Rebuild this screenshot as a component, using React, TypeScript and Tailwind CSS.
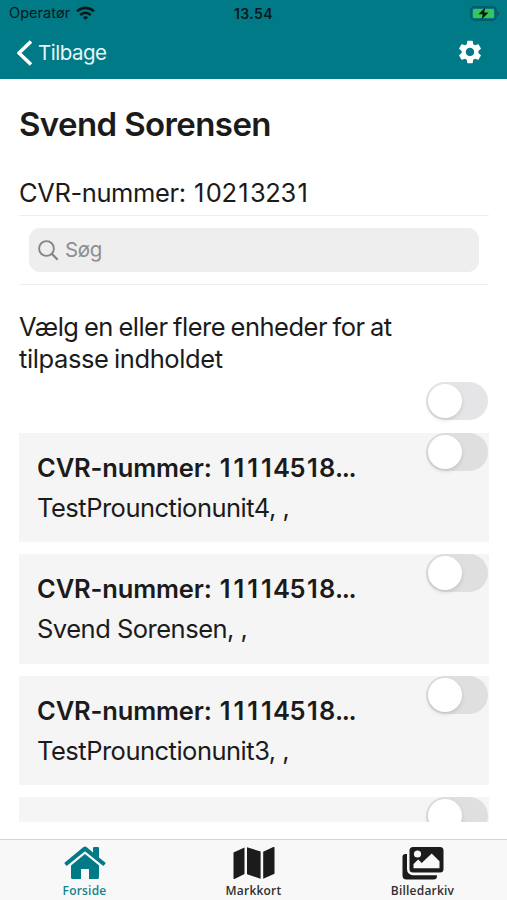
import { MdSettings } from "react-icons/md";

const SANS = "font-['Inter','Liberation_Sans',sans-serif]";

function StatusBar() {
  return (
    <div className="flex h-[27px] items-center px-[9px] text-[#06191b]">
      <div className="flex flex-1 items-center gap-[6px]">
        <span className="w-[61px] whitespace-nowrap text-[14.5px] leading-none tracking-[0.05px]">Operatør</span>
        <svg width="19" height="15" viewBox="0 0 19 15" fill="none" stroke="currentColor" strokeWidth="2.7">
          <path d="M1 5.4C5.8.8 13.2.8 18 5.4" />
          <path d="M4.2 9C7.2 6 11.8 6 14.8 9" />
          <path d="M6.8 11.2c1.6-1.3 3.8-1.3 5.4 0L9.5 14z" fill="currentColor" stroke="none" />
        </svg>
      </div>
      <span className="text-[14px] font-semibold leading-none tracking-[0.4px]">13.54</span>
      <div className="flex flex-1 justify-end">
        <svg className="mr-[-3px]" width="31" height="15" viewBox="0 0 31 15">
          <rect x="1" y="1" width="25" height="13" rx="3.5" fill="none" stroke="#0a5259" strokeWidth="1.4" />
          <rect x="3" y="3" width="21" height="9" rx="1.5" fill="#35c759" />
          <path d="M27.6 5.2c2 .8 2 3.8 0 4.6z" fill="#0a5259" />
          <path d="M15.3 1.5 8.4 8.2h4.3L11.5 13.5 18.6 6.6h-4.4z" fill="#071a12" />
        </svg>
      </div>
    </div>
  );
}

/* Evens out the digit pitch by padding the narrow ones. */
function Digits({ value }: { value: string }) {
  return (
    <span className="tracking-[-0.4px]">
      {value.split(/(1)/).map((part, i) =>
        part === "1" ? <span key={i} className="px-[1.7px]">1</span> : part,
      )}
    </span>
  );
}

function Toggle({ plain = false }: { plain?: boolean }) {
  return (
    <div className={`mr-px flex h-[38px] w-[62px] shrink-0 items-center rounded-full pl-[2px] ${plain ? "bg-[#e5e5e7]" : "bg-[#dfdfdf]"}`}>
      <div className="size-[34px] rounded-full bg-white shadow-[0_2px_4px_rgba(0,0,0,0.13)]" />
    </div>
  );
}

function Unit({ name }: { name?: string }) {
  return (
    <div className="flex h-[109.3px] shrink-0 items-start justify-between bg-[#f5f5f5] pl-[18px]">
      {name && (
        <div className="pt-[15px] text-[25.5px]">
          <div className="h-[40px] whitespace-nowrap font-semibold leading-[40px] tracking-[-0.15px]">
            CVR-nummer: <Digits value="11114518" />
            <span className="tracking-[-1.3px]">...</span>
          </div>
          <div className="h-[40px] whitespace-nowrap leading-[40px] tracking-[-0.5px]">{name}</div>
        </div>
      )}
      <div className="ml-auto">
        <Toggle />
      </div>
    </div>
  );
}

function HomeIcon() {
  return (
    <svg width="42" height="34" viewBox="0 0 42 34" fill="#007a87">
      <path d="M7 19.5 21 8l14 11.5V31.5a1.500 1.500 0 0 1-1.500 1.500H25V23h-8v10H8.500A1.500 1.500 0 0 1 7 31.500z" />
      <path d="M19.200 1.300a2.900 2.900 0 0 1 3.600 0L29 6.500V2a1 1 0 0 1 1-1h4a1 1 0 0 1 1 1v9.500l6.200 5.100a.8.8 0 0 1 .1 1.100l-1.500 1.800a.8.8 0 0 1-1.100.1L21 5.300 3.300 19.600a.8.8 0 0 1-1.100-.1L.7 17.700a.8.8 0 0 1 .1-1.100z" />
    </svg>
  );
}

function MapIcon() {
  return (
    <svg width="42" height="34" viewBox="0 0 42 34" fill="#1b1b1b">
      <path d="M.5 6.5 11.500 1.500v26.500L1.500 33a.8.8 0 0 1-1-.8z" />
      <path d="M14 1.200 27.600 5.500v27.300L14 28.200z" />
      <path d="M30.200 5.800 40.300 1.100a.8.8 0 0 1 1.200.8v25.800l-11.300 5z" />
    </svg>
  );
}

function PicturesIcon() {
  return (
    <svg width="42" height="34" viewBox="0 0 42 34">
      <path d="M5 8H3.500A3 3 0 0 0 .5 11v18.500a4 4 0 0 0 4 4h27a3.500 3.500 0 0 0 3.500-3.500v-.8H11a6 6 0 0 1-6-6z" fill="#1b1b1b" />
      <rect x="7.500" y="1" width="34" height="25.500" rx="3.500" fill="#1b1b1b" />
      <circle cx="15.500" cy="8" r="3.600" fill="#f8f8f8" />
      <path d="M11.500 22.300v-4.200l4.700-4.600 3.500 3.500L29.700 7.600l7.800 7.700v7z" fill="#f8f8f8" />
    </svg>
  );
}

function Tab({ label, active = false, children }: { label: string; active?: boolean; children: React.ReactNode }) {
  return (
    <div className="flex flex-1 flex-col items-center pt-[6px]">
      {children}
      <span className={`mt-[3px] font-['Open_Sans','Noto_Sans',sans-serif] text-[12px] font-semibold leading-[16px] tracking-[0.2px] ${active ? "text-[#16828c]" : "text-[#303030]"}`}>
        {label}
      </span>
    </div>
  );
}

export default function App() {
  return (
    <div className={`flex h-[900px] w-[507px] flex-col overflow-hidden bg-white text-[#1b1b1b] ${SANS}`}>
      <header className="h-[79px] shrink-0 bg-[#007a87]">
        <StatusBar />
        <div className="flex h-[51px] items-center justify-between pl-[16px] pr-[23px] text-white">
          <div className="flex items-center gap-[6px]">
            <svg width="16" height="26" viewBox="0 0 16 26" fill="none" stroke="currentColor" strokeWidth="3.6">
              <path d="M15 1.5 3 13l12 11.5" strokeLinejoin="round" />
            </svg>
            <span className="pt-px text-[20.5px] leading-none tracking-[-0.5px] text-[#e5f6f7]">Tilbage</span>
          </div>
          <MdSettings size={28} className="-mt-px" />
        </div>
      </header>

      <main className="flex h-[743px] shrink-0 flex-col overflow-hidden pl-[19px] pr-[18px]">
        <h1 className="mt-[24px] h-[42px] whitespace-nowrap text-[33px] font-semibold leading-[42px] tracking-[-0.6px]">Svend Sorensen</h1>
        <p className="mt-[32px] h-[32px] whitespace-nowrap text-[25.5px] leading-[32px] tracking-[-0.4px]">
          CVR-nummer: <Digits value="10213231" />
        </p>
        <div className="mt-[6px] flex h-[70px] shrink-0 items-center border-y-[1.5px] border-[#eeeeee] px-[10px]">
          <div className="flex h-[44px] w-full items-center gap-[6px] rounded-[11px] bg-[#eeeeee] pl-[9px] text-[#8e8e8e]">
            <svg width="21" height="21" viewBox="0 0 21 21" fill="none" stroke="#858585" strokeWidth="1.9">
              <circle cx="8.5" cy="8.5" r="7.4" />
              <path d="m13.7 13.7 6 6" strokeWidth="2.3" />
            </svg>
            <span className="text-[20.5px] leading-none tracking-[-0.4px]">Søg</span>
          </div>
        </div>
        <p className="mt-[26px] h-[64px] whitespace-nowrap text-[25.5px] leading-[32px] tracking-[-0.5px] [word-spacing:-1.2px]">
          Vælg en eller flere enheder for at
          <br />
          <span className="tracking-[-0.4px]">tilpasse indholdet</span>
        </p>
        <div className="mt-[7px] flex shrink-0 justify-end">
          <Toggle plain />
        </div>
        <div className="mt-[13px] flex flex-col gap-[12px]">
          <Unit name="TestProunctionunit4, ," />
          <Unit name="Svend Sorensen, ," />
          <Unit name="TestProunctionunit3, ," />
          <Unit />
        </div>
      </main>

      <nav className="mt-auto flex h-[61px] shrink-0 border-t border-[#d4d4d4] bg-[#f8f8f8]">
        <Tab label="Forside" active><HomeIcon /></Tab>
        <Tab label="Markkort"><MapIcon /></Tab>
        <Tab label="Billedarkiv"><PicturesIcon /></Tab>
      </nav>
    </div>
  );
}
